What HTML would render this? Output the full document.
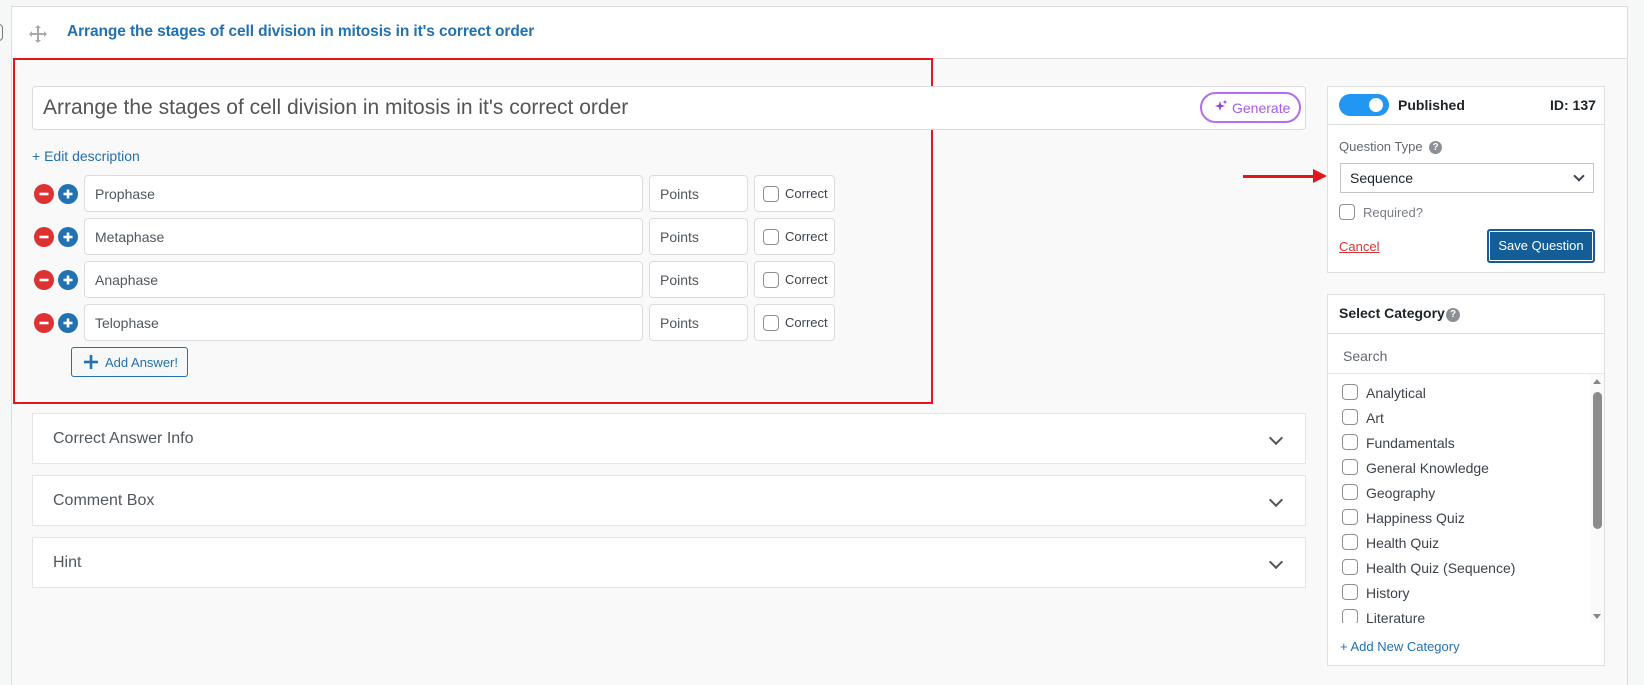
<!DOCTYPE html>
<html style="width:1644px;height:685px;overflow:hidden"><head><meta charset="utf-8"><style>
*{box-sizing:border-box;margin:0;padding:0}
body{width:1644px;height:685px;background:#f6f7f7;font-family:"Liberation Sans",sans-serif;position:relative;overflow:hidden;color:#3c434a}
.a{position:absolute}
.card{left:11px;top:6px;width:1617px;height:679px;background:#f9f9f9;border:1px solid #dcdcde;border-bottom:none}
.hdr{left:12px;top:7px;width:1615px;height:52px;background:#fff;border-bottom:1px solid #dcdcde}
.inp{background:#fff;border:1px solid #dcdcde;border-radius:4px}
.acc{left:32px;width:1274px;height:51px;background:#fff;border:1px solid #e5e5e5;font-size:16px;color:#50575e;padding:16px 20px}
.chev{position:absolute;right:24px;top:19px;width:10px;height:10px;border-right:2px solid #50575e;border-bottom:2px solid #50575e;transform:rotate(45deg)}
.cb{width:16px;height:16px;border:1px solid #8c8f94;border-radius:4px;background:#fff}
.pan{background:#fff;border:1px solid #e0e0e0}
</style></head><body>
<div class="a" style="left:-6px;top:24px;width:9px;height:17px;border:1px solid #777;border-radius:4px"></div>
<div class="a card"></div>
<div class="a hdr"></div>
<svg class="a" style="left:28px;top:24px" width="20" height="20" viewBox="0 0 20 20"><path d="M10 1 L7 4 H9 V9 H4 V7 L1 10 L4 13 V11 H9 V16 H7 L10 19 L13 16 H11 V11 H16 V13 L19 10 L16 7 V9 H11 V4 H13 Z" fill="#a7aaad"/></svg>
<div class="a" style="left:67px;top:23px;font-size:15.5px;font-weight:bold;color:#2271b1;letter-spacing:-0.1px">Arrange the stages of cell division in mitosis in it's correct order</div>

<div class="a" style="left:13px;top:58px;width:920px;height:346px;border:2px solid #e3161b"></div>

<div class="a inp" style="left:32px;top:86px;width:1274px;height:44px"></div>
<div class="a" style="left:43px;top:96px;font-size:21px;color:#555">Arrange the stages of cell division in mitosis in it's correct order</div>
<div class="a" style="left:1200px;top:92px;width:101px;height:31px;border:2px solid #b56cf0;border-radius:16px;color:#a65ce8;font-size:14px;padding:6px 0 0 30px">Generate</div>
<svg class="a" style="left:1214px;top:99px" width="14" height="14" viewBox="0 0 14 14"><path d="M6 2 L7.2 5.8 L11 7 L7.2 8.2 L6 12 L4.8 8.2 L1 7 L4.8 5.8 Z" fill="#8e44d8"/><path d="M11 0.5 L11.6 2.4 L13.5 3 L11.6 3.6 L11 5.5 L10.4 3.6 L8.5 3 L10.4 2.4 Z" fill="#8e44d8"/></svg>
<div class="a" style="left:32px;top:148px;font-size:14px;color:#2271b1">+ Edit description</div>

<svg class="a" style="left:34px;top:184px" width="50" height="150" viewBox="0 0 50 150">
<g id="r"><circle cx="10" cy="10" r="10" fill="#dc3232"/><rect x="5.5" y="8.7" width="9" height="2.6" fill="#fff"/><circle cx="34" cy="10" r="10" fill="#2271b1"/><rect x="29.5" y="8.7" width="9" height="2.6" fill="#fff"/><rect x="32.7" y="5.5" width="2.6" height="9" fill="#fff"/></g>
<use href="#r" y="43"/><use href="#r" y="86"/><use href="#r" y="129"/>
</svg>
<div class="a inp" style="left:84px;top:175px;width:559px;height:37px;font-size:14px;color:#50575e;padding:10px 10px">Prophase</div>
<div class="a inp" style="left:649px;top:175px;width:99px;height:37px;font-size:14px;color:#50575e;padding:10px 10px">Points</div>
<div class="a inp" style="left:754px;top:175px;width:81px;height:37px;font-size:13px;color:#3c434a;padding:10px 0 0 30px">Correct</div><div class="a cb" style="left:763px;top:186px"></div>

<div class="a inp" style="left:84px;top:218px;width:559px;height:37px;font-size:14px;color:#50575e;padding:10px 10px">Metaphase</div>
<div class="a inp" style="left:649px;top:218px;width:99px;height:37px;font-size:14px;color:#50575e;padding:10px 10px">Points</div>
<div class="a inp" style="left:754px;top:218px;width:81px;height:37px;font-size:13px;padding:10px 0 0 30px">Correct</div><div class="a cb" style="left:763px;top:229px"></div>

<div class="a inp" style="left:84px;top:261px;width:559px;height:37px;font-size:14px;color:#50575e;padding:10px 10px">Anaphase</div>
<div class="a inp" style="left:649px;top:261px;width:99px;height:37px;font-size:14px;color:#50575e;padding:10px 10px">Points</div>
<div class="a inp" style="left:754px;top:261px;width:81px;height:37px;font-size:13px;padding:10px 0 0 30px">Correct</div><div class="a cb" style="left:763px;top:272px"></div>

<div class="a inp" style="left:84px;top:304px;width:559px;height:37px;font-size:14px;color:#50575e;padding:10px 10px">Telophase</div>
<div class="a inp" style="left:649px;top:304px;width:99px;height:37px;font-size:14px;color:#50575e;padding:10px 10px">Points</div>
<div class="a inp" style="left:754px;top:304px;width:81px;height:37px;font-size:13px;padding:10px 0 0 30px">Correct</div><div class="a cb" style="left:763px;top:315px"></div>

<div class="a" style="left:71px;top:347px;width:117px;height:30px;border:1px solid #2271b1;border-radius:3px;background:#f6f7f7;color:#2271b1;font-size:13px;padding:7px 0 0 33px">Add Answer!</div>
<svg class="a" style="left:84px;top:355px" width="14" height="14" viewBox="0 0 14 14"><rect x="5.7" y="0" width="2.6" height="14" fill="#2271b1"/><rect x="0" y="5.7" width="14" height="2.6" fill="#2271b1"/></svg>

<div class="a acc" style="top:413px">Correct Answer Info<span class="chev"></span></div>
<div class="a acc" style="top:475px">Comment Box<span class="chev"></span></div>
<div class="a acc" style="top:537px">Hint<span class="chev"></span></div>

<div class="a" style="left:1243px;top:175px;width:72px;height:3px;background:#e3161b"></div>
<div class="a" style="left:1313px;top:169px;width:0;height:0;border-top:7px solid transparent;border-bottom:7px solid transparent;border-left:14px solid #e3161b"></div>

<div class="a pan" style="left:1327px;top:86px;width:278px;height:187px"></div>
<div class="a" style="left:1328px;top:124px;width:276px;height:1px;background:#dcdcde"></div>
<div class="a" style="left:1339px;top:94px;width:50px;height:22px;border-radius:11px;background:#2196f3"></div>
<div class="a" style="left:1369px;top:98px;width:14px;height:14px;border-radius:50%;background:#fff"></div>
<div class="a" style="left:1398px;top:97px;font-size:14px;font-weight:bold;color:#1d2327">Published</div>
<div class="a" style="left:1550px;top:97px;font-size:14px;font-weight:bold;color:#1d2327">ID: 137</div>
<div class="a" style="left:1339px;top:139px;font-size:13px;color:#646970">Question Type</div>
<div class="a" style="left:1429px;top:141px;width:13px;height:13px;border-radius:50%;background:#8c8f94;color:#fff;font-size:10px;font-weight:bold;text-align:center;line-height:13px">?</div>
<div class="a" style="left:1340px;top:163px;width:254px;height:30px;border:1px solid #c3c4c7;background:#fff;font-size:14px;color:#1d2327;padding:6px 9px">Sequence</div>
<div class="a" style="left:1575px;top:172px;width:8px;height:8px;border-right:2px solid #3c434a;border-bottom:2px solid #3c434a;transform:rotate(45deg)"></div>
<div class="a cb" style="left:1339px;top:204px"></div>
<div class="a" style="left:1363px;top:205px;font-size:13px;color:#787c82">Required?</div>
<div class="a" style="left:1339px;top:239px;font-size:13px;color:#d63638;text-decoration:underline">Cancel</div>
<div class="a" style="left:1487px;top:229px;width:108px;height:34px;background:#135e96;border:2px solid #135e96;box-shadow:inset 0 0 0 1px #fff;border-radius:3px;color:#fff;font-size:13px;text-align:center;line-height:30px">Save Question</div>

<div class="a pan" style="left:1327px;top:294px;width:278px;height:372px"></div>
<div class="a" style="left:1328px;top:333px;width:276px;height:1px;background:#dcdcde"></div>
<div class="a" style="left:1339px;top:305px;font-size:14px;font-weight:bold;color:#1d2327">Select Category</div>
<div class="a" style="left:1446px;top:308px;width:14px;height:14px;border-radius:50%;background:#8c8f94;color:#fff;font-size:10px;font-weight:bold;text-align:center;line-height:14px">?</div>
<div class="a" style="left:1343px;top:348px;font-size:14px;color:#646970">Search</div>
<div class="a" style="left:1328px;top:373px;width:276px;height:1px;background:#e8e8e8"></div>
<div class="a" style="left:1328px;top:374px;width:276px;height:249px;overflow:hidden">
<div class="a cb" style="left:14px;top:10px"></div><div class="a" style="left:38px;top:11px;font-size:14px">Analytical</div>
<div class="a cb" style="left:14px;top:35px"></div><div class="a" style="left:38px;top:36px;font-size:14px">Art</div>
<div class="a cb" style="left:14px;top:60px"></div><div class="a" style="left:38px;top:61px;font-size:14px">Fundamentals</div>
<div class="a cb" style="left:14px;top:85px"></div><div class="a" style="left:38px;top:86px;font-size:14px">General Knowledge</div>
<div class="a cb" style="left:14px;top:110px"></div><div class="a" style="left:38px;top:111px;font-size:14px">Geography</div>
<div class="a cb" style="left:14px;top:135px"></div><div class="a" style="left:38px;top:136px;font-size:14px">Happiness Quiz</div>
<div class="a cb" style="left:14px;top:160px"></div><div class="a" style="left:38px;top:161px;font-size:14px">Health Quiz</div>
<div class="a cb" style="left:14px;top:185px"></div><div class="a" style="left:38px;top:186px;font-size:14px">Health Quiz (Sequence)</div>
<div class="a cb" style="left:14px;top:210px"></div><div class="a" style="left:38px;top:211px;font-size:14px">History</div>
<div class="a cb" style="left:14px;top:235px"></div><div class="a" style="left:38px;top:236px;font-size:14px">Literature</div>
</div>
<div class="a" style="left:1590px;top:374px;width:14px;height:249px;background:#fafafa"></div>
<div class="a" style="left:1593px;top:379px;width:0;height:0;border-left:4px solid transparent;border-right:4px solid transparent;border-bottom:5px solid #888"></div>
<div class="a" style="left:1593px;top:392px;width:9px;height:137px;border-radius:5px;background:#8c8c8c"></div>
<div class="a" style="left:1593px;top:614px;width:0;height:0;border-left:4px solid transparent;border-right:4px solid transparent;border-top:5px solid #888"></div>
<div class="a" style="left:1340px;top:639px;font-size:13px;color:#2271b1">+ Add New Category</div>
</body></html>
